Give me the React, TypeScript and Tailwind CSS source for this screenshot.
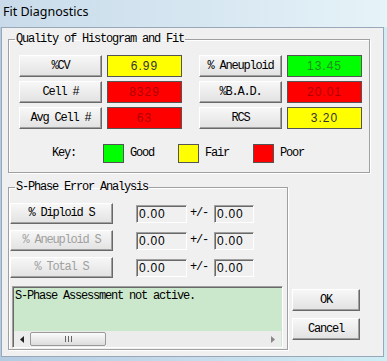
import React from "react";

const mono = "font-mono text-[12px] tracking-[-1.2px] leading-[13px]";
const sans = "font-[family-name:'Liberation_Sans',Arial,sans-serif] text-[12px]";

function Btn({ children, className = "", disabled = false }: { children: React.ReactNode; className?: string; disabled?: boolean }) {
  return (
    <div
      className={`flex items-center justify-center bg-gradient-to-b from-[#f7f7f7] to-[#e2e2e2] border border-t-white border-l-white border-r-[#696969] border-b-[#696969] shadow-[inset_-1px_-1px_0_#a0a0a0] ${mono} ${
        disabled ? "text-[#a0a0a0]" : "text-black"
      } ${className}`}
    >
      {children}
    </div>
  );
}

function Value({ text, bg, fg }: { text: string; bg: string; fg: string }) {
  return (
    <div className={`ml-[5px] w-[75px] h-[22px] border border-[#555] flex items-center justify-center tracking-[1px] ${sans} ${bg} ${fg}`}>
      {text}
    </div>
  );
}

function Sunken({ w, text }: { w: string; text: string }) {
  return (
    <div
      className={`${w} h-[18px] bg-[#f0f0f0] border border-t-[#a0a0a0] border-l-[#a0a0a0] border-r-white border-b-white shadow-[inset_1px_1px_0_#696969] flex items-center pl-[2px] ${sans} text-black tracking-[0.8px]`}
    >
      {text}
    </div>
  );
}

const quality = [
  ["%CV", "6.99", "bg-[#ffff00]", "text-[#333]", "% Aneuploid", "13.45", "bg-[#00ff00]", "text-[#1f8f1f]"],
  ["Cell #", "8329", "bg-[#ff0000]", "text-[#b00000]", "%B.A.D.", "20.01", "bg-[#ff0000]", "text-[#b00000]"],
  ["Avg Cell #", "63", "bg-[#ff0000]", "text-[#b00000]", "RCS", "3.20", "bg-[#ffff00]", "text-[#333]"],
];

const sphase = [
  ["% Diploid S", false],
  ["% Aneuploid S", true],
  ["% Total S", true],
] as const;

export default function App() {
  return (
    <div className="w-[387px] h-[361px] flex flex-col bg-gradient-to-r from-[#b4cce2] via-[#c6dbeb] to-[#cdeef5] overflow-hidden">
      {/* Title bar */}
      <div className="h-[27px] flex items-center pl-[3px] pb-[3px] bg-gradient-to-r from-[#c9dbea] via-[#d6e6f1] to-[#e6f4f8] font-[family-name:'Segoe_UI','Noto_Sans',sans-serif] text-[12.5px] text-black">
        Fit Diagnostics
      </div>

      {/* Window body */}
      <div className="ml-[1px] mr-[3px] h-[330px] bg-[#f0f0f0] border border-[#98a8b8] flex flex-col">
        {/* Quality of Histogram and Fit */}
        <fieldset className="ml-[6px] mt-[5px] w-[362px] border border-[#a0a0a0] shadow-[inset_1px_1px_0_#fff,1px_1px_0_#fff]">
          <legend className={`ml-[6px] px-[1px] ${mono} text-black`}>Quality of Histogram and Fit</legend>
          <div className="pt-[9px] pl-[10px] pb-[9px] flex flex-col gap-[4px]">
            {quality.map((r) => (
              <div key={r[0]} className="flex">
                <Btn className="w-[83px] h-[22px]">{r[0]}</Btn>
                <Value text={r[1]} bg={r[2]} fg={r[3]} />
                <Btn className="ml-[17px] w-[83px] h-[22px]">{r[4]}</Btn>
                <Value text={r[5]} bg={r[6]} fg={r[7]} />
              </div>
            ))}
            <div className={`mt-[11px] flex items-center ${mono} text-black`}>
              <span className="ml-[33px] w-[24px]">Key:</span>
              <span className="ml-[27px] w-[21px] h-[19px] bg-[#00ff00] border border-[#555]" />
              <span className="ml-[6px] w-[24px]">Good</span>
              <span className="ml-[24px] w-[21px] h-[19px] bg-[#ffff00] border border-[#555]" />
              <span className="ml-[6px] w-[24px]">Fair</span>
              <span className="ml-[24px] w-[21px] h-[19px] bg-[#ff0000] border border-[#555]" />
              <span className="ml-[6px]">Poor</span>
            </div>
          </div>
        </fieldset>

        <div className="flex">
          {/* S-Phase Error Analysis */}
          <fieldset className="ml-[6px] mt-[8px] w-[280px] border border-[#a0a0a0] shadow-[inset_1px_1px_0_#fff,1px_1px_0_#fff]">
            <legend className={`ml-[6px] px-[1px] ${mono} text-black`}>S-Phase Error Analysis</legend>
            <div className="pt-[9px] pl-[1px] pb-[1px] flex flex-col gap-[6px]">
              {sphase.map(([label, dis]) => (
                <div key={label} className="flex items-center">
                  <Btn className="w-[103px] h-[21px]" disabled={dis}>
                    {label}
                  </Btn>
                  <div className="ml-[23px]">
                    <Sunken w="w-[51px]" text="0.00" />
                  </div>
                  <span className={`ml-[3px] w-[24px] ${mono} text-black`}>+/-</span>
                  <Sunken w="w-[40px]" text="0.00" />
                </div>
              ))}
              {/* Message box */}
              <div className="mt-[2px] ml-[2px] w-[271px] h-[62px] bg-[#cce8cc] border border-t-[#a0a0a0] border-l-[#a0a0a0] border-r-white border-b-white shadow-[inset_1px_1px_0_#696969] flex flex-col">
                <div className={`flex-1 pl-[2px] pt-[3px] ${mono} text-black`}>S-Phase Assessment not active.</div>
                <div className="mx-[1px] h-[16px] bg-[#ececec] flex items-center">
                  <div className="w-[16px] flex items-center justify-center">
                    <svg width="4" height="7" viewBox="0 0 4 7">
                      <path d="M4 0 L0 3.5 L4 7 Z" fill="#222" />
                    </svg>
                  </div>
                  <div className="w-[76px] h-[14px] rounded-[2px] border border-[#9a9a9a] bg-gradient-to-b from-[#fbfbfb] to-[#dcdcdc] flex items-center justify-center gap-[2px]">
                    <span className="w-[1px] h-[6px] bg-[#666]" />
                    <span className="w-[1px] h-[6px] bg-[#666]" />
                    <span className="w-[1px] h-[6px] bg-[#666]" />
                  </div>
                  <div className="flex-1" />
                  <div className="w-[16px] flex items-center justify-center">
                    <svg width="4" height="7" viewBox="0 0 4 7">
                      <path d="M0 0 L4 3.5 L0 7 Z" fill="#888" />
                    </svg>
                  </div>
                </div>
              </div>
            </div>
          </fieldset>

          {/* OK / Cancel */}
          <div className="ml-[4px] flex flex-col justify-end gap-[7px] pb-[10px]">
            <Btn className="w-[68px] h-[22px]">OK</Btn>
            <Btn className="w-[68px] h-[22px]">Cancel</Btn>
          </div>
        </div>
      </div>
    </div>
  );
}
